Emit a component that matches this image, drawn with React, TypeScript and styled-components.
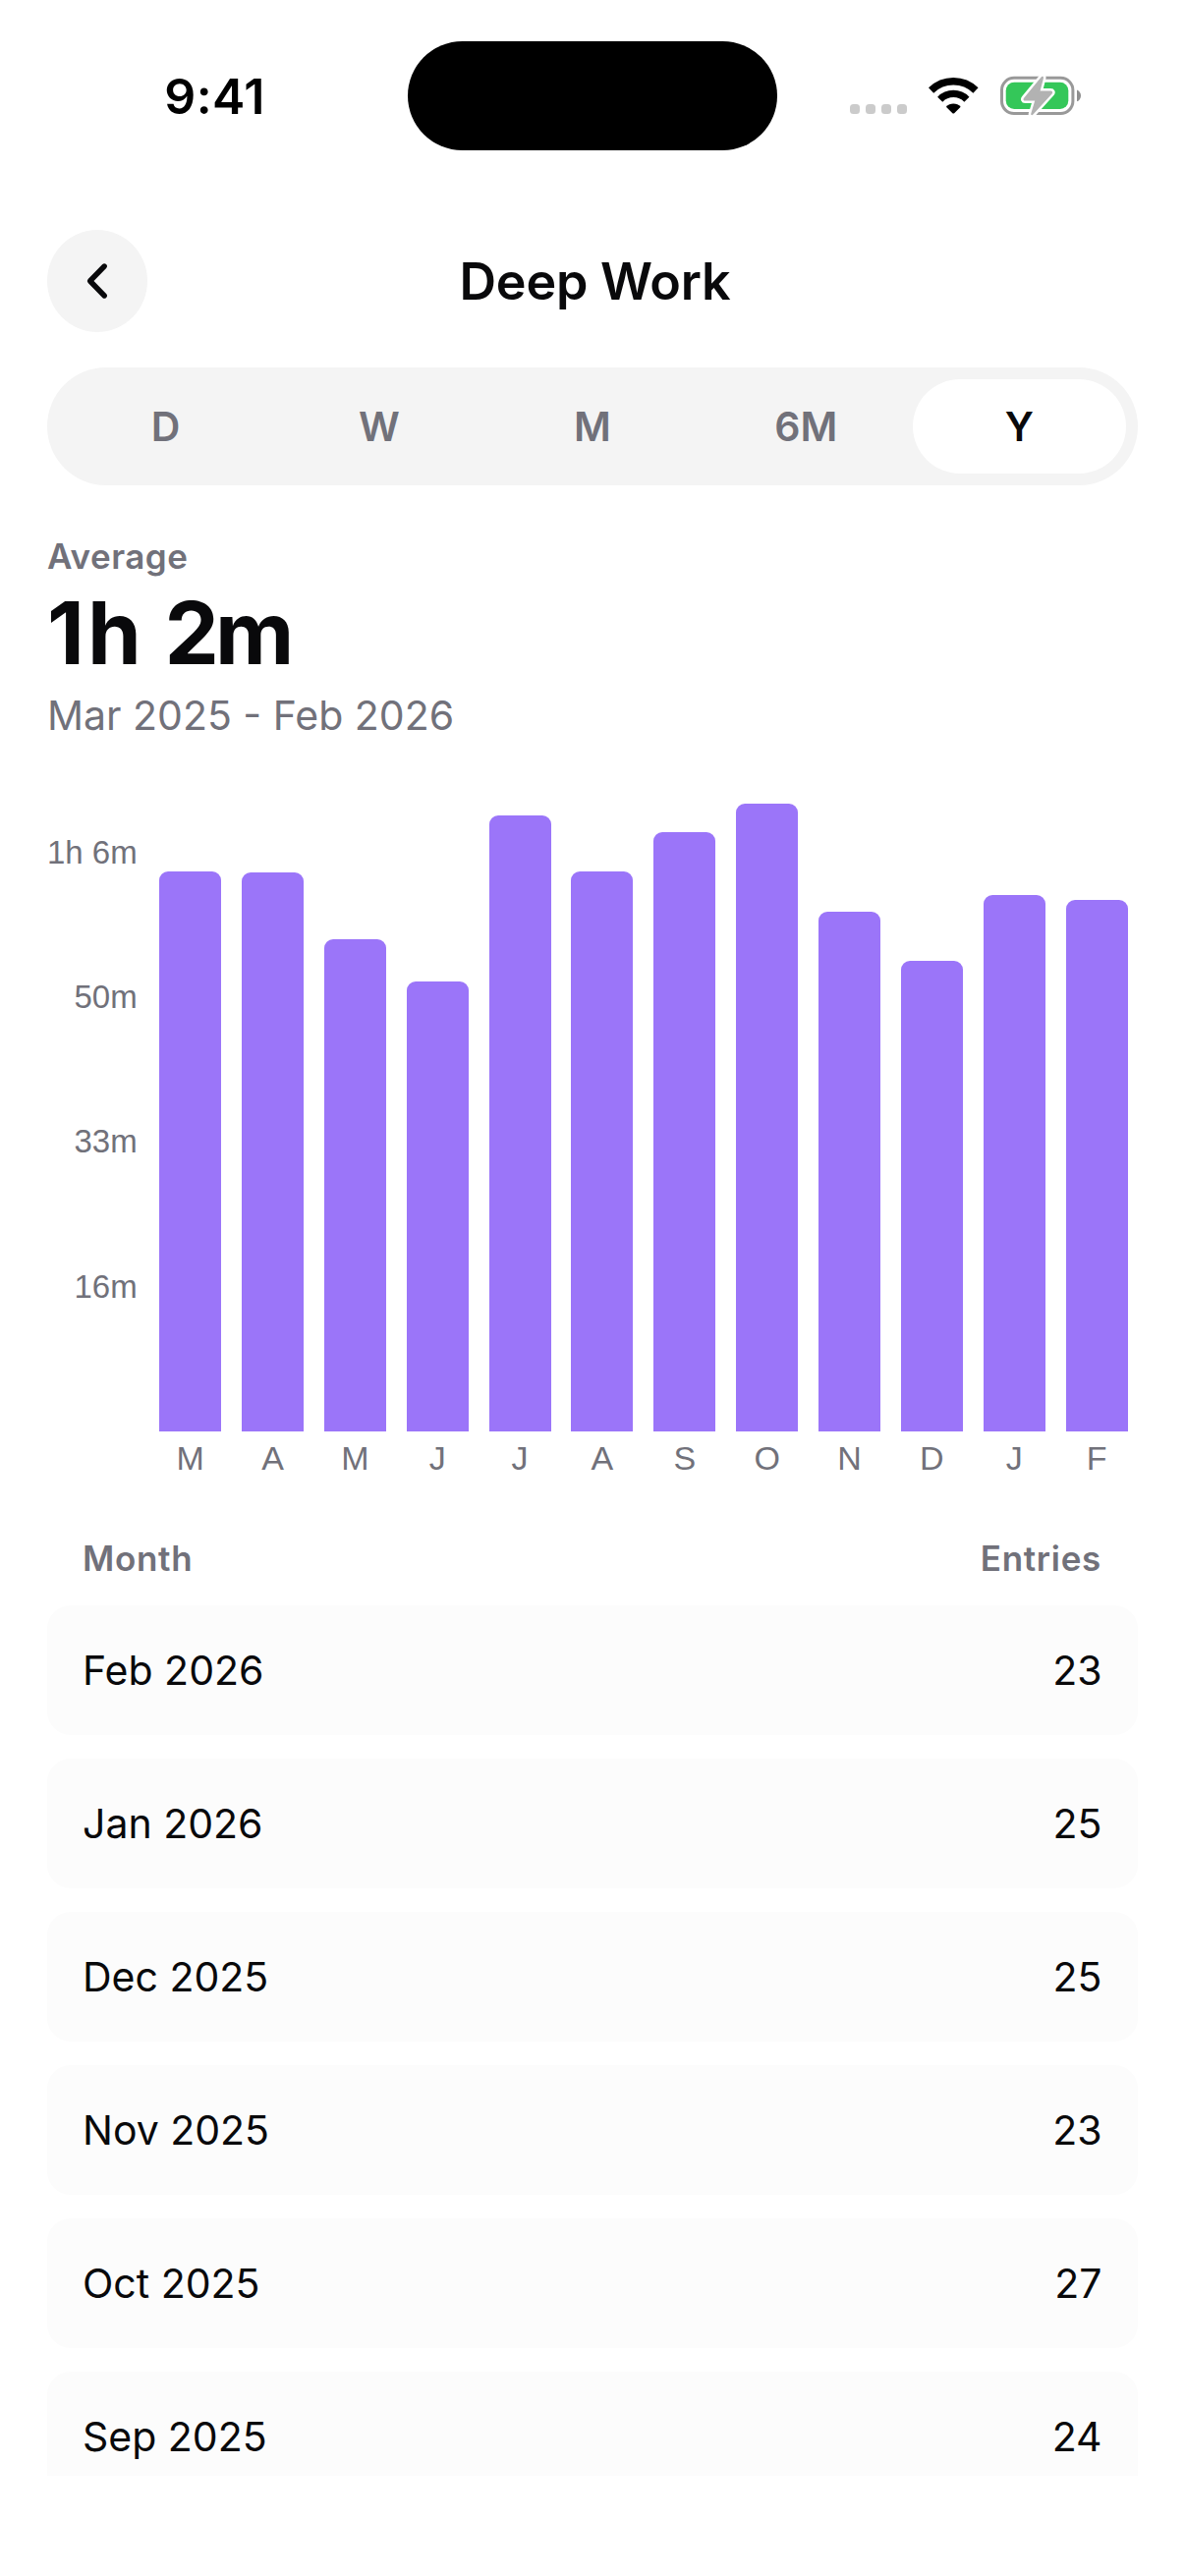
import React from "react";
import styled, { createGlobalStyle } from "styled-components";

const GlobalStyle = createGlobalStyle`
  * { box-sizing: border-box; }
  body { margin: 0; background: #fff; }
`;

const ink = "#09090b";
const muted = "#71717a";

const Screen = styled.main`
  width: 1206px;
  height: 2622px;
  overflow: hidden;
  display: flex;
  flex-direction: column;
  background: #fff;
  color: ${ink};
  font-family: Inter, "Liberation Sans", sans-serif;
`;

const StatusBar = styled.div`
  height: 194px;
  flex: none;
  display: grid;
  grid-template-columns: 415px 376px 415px;
  padding-top: 41.5px;
  align-items: start;
`;

const Time = styled.div`
  height: 111px;
  padding: 1px 0 0 22px;
  display: flex;
  align-items: center;
  justify-content: center;
  font-size: 50px;
  font-weight: 600;
  color: #000;
  letter-spacing: 0.4px;
`;

const Island = styled.div`
  height: 111px;
  border-radius: 56px;
  background: #000;
`;

const StatusIcons = styled.div`
  display: flex;
  align-items: flex-start;
  padding: 34.5px 0 0 74px;
`;

const Signal = styled.div`
  display: flex;
  gap: 6px;
  padding-top: 30px;
`;

const SignalDot = styled.i`
  width: 10px;
  height: 10px;
  border-radius: 3.5px;
  background: #cbcbcb;
`;

const WifiGlyph = styled.svg`
  display: block;
  margin: 2px 0 0 21px;
`;

const BatteryGlyph = styled.svg`
  display: block;
  margin-left: 21px;
`;

const Header = styled.header`
  height: 180px;
  flex: none;
  padding: 40px 48px 0;
  display: grid;
  grid-template-columns: 102px 1fr 102px;
  align-items: start;
`;

const BackButton = styled.button`
  width: 102px;
  height: 104px;
  padding: 0;
  border: 0;
  border-radius: 50%;
  background: #f4f4f4;
  display: flex;
  align-items: center;
  justify-content: center;
`;

const Title = styled.h1`
  margin: 0;
  padding: 1px 0 0 5px;
  text-align: center;
  font-size: 52px;
  line-height: 104px;
  font-weight: 600;
  letter-spacing: -0.2px;
`;

const Segments = styled.nav`
  height: 120px;
  flex: none;
  margin: 0 48px;
  padding: 12px;
  display: grid;
  grid-template-columns: repeat(5, 1fr);
  border-radius: 60px;
  background: #f4f4f4;
`;

const Segment = styled.button<{ $active: boolean }>`
  border: 0;
  padding: 0;
  border-radius: 48px;
  background: ${(p) => (p.$active ? "#fff" : "transparent")};
  color: ${(p) => (p.$active ? ink : muted)};
  font: 600 41px/96px Inter, sans-serif;
`;

const Summary = styled.section`
  flex: none;
  height: 290px;
  padding: 45px 48px 0;
  display: flex;
  flex-direction: column;
`;

const SummaryLabel = styled.div`
  font-size: 35px;
  line-height: 54px;
  font-weight: 600;
  letter-spacing: 0.5px;
  color: ${muted};
`;

const SummaryValue = styled.div`
  padding-top: 1px;
  font-size: 88px;
  line-height: 100px;
  font-weight: 700;
`;

const ValuePart = styled.span<{ $tracking: number }>`
  letter-spacing: ${(p) => p.$tracking}px;
`;

const SummaryRange = styled.div`
  font-size: 41px;
  line-height: 68px;
  color: ${muted};
`;

const Chart = styled.section`
  flex: none;
  height: 754px;
  padding: 0 48px;
  display: grid;
  grid-template-columns: 103.7px 1fr;
`;

const YAxis = styled.div`
  display: flex;
  flex-direction: column;
  align-items: flex-end;
  padding: 10px 12px 0 0;
  font: 400 33px/147.2px "Liberation Sans", Arial, sans-serif;
  color: ${muted};
  white-space: nowrap;
`;

const Plot = styled.div`
  display: grid;
  grid-template-columns: repeat(12, 1fr);
`;

const Column = styled.div`
  display: flex;
  flex-direction: column;
  align-items: center;
`;

const BarSlot = styled.div`
  width: 75%;
  height: 673px;
  display: flex;
  align-items: flex-end;
`;

const Bar = styled.div`
  width: 100%;
  border-radius: 9px 9px 0 0;
  background: #9b75f9;
`;

const MonthLetter = styled.span`
  padding-top: 4px;
  font: 400 34px/46px "Liberation Sans", Arial, sans-serif;
  color: ${muted};
`;

const Entries = styled.section`
  flex: none;
  height: 982px;
  overflow: hidden;
  padding: 0 48px;
`;

const TableHead = styled.div`
  height: 96px;
  padding: 20px 37px 0 36px;
  display: flex;
  justify-content: space-between;
  font-size: 35px;
  line-height: 56px;
  font-weight: 600;
  letter-spacing: 0.7px;
  color: ${muted};
`;

const RowList = styled.div`
  display: flex;
  flex-direction: column;
  gap: 24px;
`;

const Row = styled.div`
  height: 132px;
  flex: none;
  padding: 0 36.5px 0 36px;
  display: flex;
  align-items: center;
  justify-content: space-between;
  border-radius: 24px;
  background: #fcfcfc;
  font-size: 41px;
`;

const ranges = ["D", "W", "M", "6M", "Y"];
const ticks = ["1h 6m", "50m", "33m", "16m"];

const months: [string, number][] = [
  ["M", 570], ["A", 569], ["M", 501], ["J", 458], ["J", 627], ["A", 570],
  ["S", 610], ["O", 639], ["N", 529], ["D", 479], ["J", 546], ["F", 541],
];

const rows: [string, number][] = [
  ["Feb 2026", 23], ["Jan 2026", 25], ["Dec 2025", 25],
  ["Nov 2025", 23], ["Oct 2025", 27], ["Sep 2025", 24],
];

const Wifi = () => (
  <WifiGlyph width="53" height="38" viewBox="0 0 53 38">
    <path d="M3.6 14A32.5 32.5 0 0 1 49 14" fill="none" stroke="#000" strokeWidth="7.4" />
    <path d="M12.7 23.2A19 19 0 0 1 39.9 23.2" fill="none" stroke="#000" strokeWidth="7.2" />
    <path d="M25.4 37.2L18.9 30.8A10 10 0 0 1 33.7 30.8L27.2 37.2Q26.3 38 25.4 37.2Z" />
  </WifiGlyph>
);

const bolt =
  "M41.6 2.6C42.6 1.3 44.3 1.8 44 3.4L40.6 16.4H51.2C53.2 16.4 53.8 18 52.6 19.4L33.4 40.6C32.3 41.8 30.8 41 31.3 39.6L35.2 26.6H25.4C23.4 26.6 23 25 24.1 23.7Z";

const Battery = () => (
  <BatteryGlyph width="84" height="44" viewBox="0 0 84 44">
    <rect x="1.5" y="3.3" width="72.4" height="36.2" rx="12.5" fill="none" stroke="#999" strokeWidth="3" />
    <rect x="5.7" y="7.7" width="63.6" height="27.4" rx="8.5" fill="#34c759" />
    <path d="M78 15.5C80.6 16.6 82 18.8 82 21.4S80.6 26.2 78 27.3Z" fill="#8e8e8e" />
    <path d={bolt} fill="#b2b2b2" stroke="#fff" strokeWidth="5" paintOrder="stroke" strokeLinejoin="round" />
  </BatteryGlyph>
);

export default function App() {
  return (
    <Screen>
      <GlobalStyle />
      <StatusBar>
        <Time>9:41</Time>
        <Island />
        <StatusIcons>
          <Signal>
            <SignalDot /><SignalDot /><SignalDot /><SignalDot />
          </Signal>
          <Wifi />
          <Battery />
        </StatusIcons>
      </StatusBar>
      <Header>
        <BackButton aria-label="Back">
          <svg width="36" height="44" viewBox="0 0 36 44">
            <path d="M25.2 7L10.6 22L25.2 37" fill="none" stroke={ink} strokeWidth="5.4" strokeLinecap="round" strokeLinejoin="round" />
          </svg>
        </BackButton>
        <Title>Deep Work</Title>
      </Header>
      <Segments>
        {ranges.map((r) => (
          <Segment key={r} $active={r === "Y"}>{r}</Segment>
        ))}
      </Segments>
      <Summary>
        <SummaryLabel>Average</SummaryLabel>
        <SummaryValue>
          <ValuePart $tracking={3}>1h</ValuePart> <ValuePart $tracking={-4}>2m</ValuePart>
        </SummaryValue>
        <SummaryRange>Mar 2025 - Feb 2026</SummaryRange>
      </Summary>
      <Chart>
        <YAxis>
          {ticks.map((t) => <span key={t}>{t}</span>)}
        </YAxis>
        <Plot>
          {months.map(([letter, height], i) => (
            <Column key={i}>
              <BarSlot><Bar style={{ height }} /></BarSlot>
              <MonthLetter>{letter}</MonthLetter>
            </Column>
          ))}
        </Plot>
      </Chart>
      <Entries>
        <TableHead><span>Month</span><span>Entries</span></TableHead>
        <RowList>
          {rows.map(([month, count]) => (
            <Row key={month}><span>{month}</span><span>{count}</span></Row>
          ))}
        </RowList>
      </Entries>
    </Screen>
  );
}
